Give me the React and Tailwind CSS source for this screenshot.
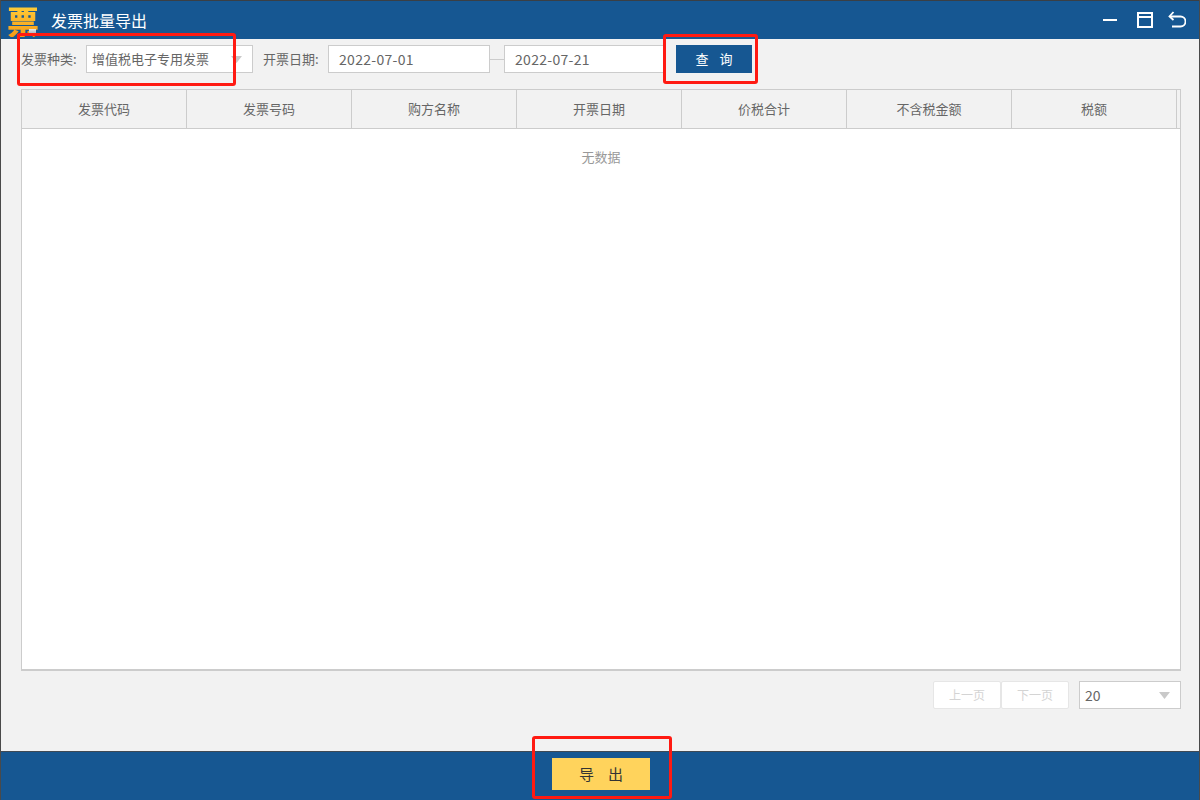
const font = "[font-family:'Noto_Sans_CJK_SC','Liberation_Sans',sans-serif]"

const columns = ['发票代码', '发票号码', '购方名称', '开票日期', '价税合计', '不含税金额', '税额']

function Caret({ className }) {
  return (
    <svg width="11" height="7" viewBox="0 0 11 7" className={className}>
      <path d="M0 0h11L5.5 7z" fill="#c9c9c9" />
    </svg>
  )
}

function RedBox({ className }) {
  return <div className={`absolute border-[3px] border-[#ff1a12] rounded-[3px] pointer-events-none ${className}`} />
}

export default function App() {
  return (
    <div className={`${font} relative w-[1200px] h-[800px] flex flex-col overflow-hidden bg-[#f2f2f2] border-x border-[#4a4a4a] text-[13px] text-[#666]`}>
      <header className="h-[39px] shrink-0 flex items-center bg-[#165792] border-t border-[#3a3f45] text-white">
        <div className="relative ml-[6px] w-[32px] h-[34px] flex items-center justify-center">
          <span className="text-[32px] leading-[34px] font-black bg-gradient-to-b from-[#ffd23c] to-[#f59a12] bg-clip-text text-transparent">票</span>
          <span className="absolute right-[3px] bottom-[2px] w-[7px] h-[6px] bg-gradient-to-b from-[#e8e8e8] to-[#8fa3b5]" />
        </div>
        <h1 className="ml-[12px] text-[16px] leading-none font-normal">发票批量导出</h1>
        <div className="ml-auto flex items-center mr-[13px]">
          <svg width="14" height="14" viewBox="0 0 14 14" fill="none" stroke="white" strokeWidth="2"><path d="M0 7h14" /></svg>
          <svg className="ml-[20px]" width="16" height="16" viewBox="0 0 16 16" fill="none" stroke="white" strokeWidth="2"><path d="M1 1h14v14H1zM1 5h14" /></svg>
          <svg className="ml-[15px]" width="18" height="18" viewBox="0 0 18 18" fill="none" stroke="white" strokeWidth="1.8"><path d="M5.5 1 1.5 5.5 5.5 9" /><path d="M2 5.5h10.5a4.5 4.5 0 0 1 0 10H4" /></svg>
        </div>
      </header>

      <div className="h-[50px] shrink-0 flex items-start pt-[6px] pl-[20px]">
        <span className="w-[65px] leading-[28px]">发票种类:</span>
        <div className="w-[167px] h-[28px] flex items-center justify-between bg-white border border-[#ccc] pl-[5px] pr-[10px]">
          <span>增值税电子专用发票</span>
          <Caret />
        </div>
        <span className="ml-[10px] w-[65px] leading-[28px]">开票日期:</span>
        <div className="w-[162px] h-[28px] flex items-center bg-white border border-[#ccc] pl-[10px] text-[14px] tracking-[0.3px]">2022-07-01</div>
        <div className="w-[14px] h-[28px] flex items-center"><div className="w-full h-px bg-[#ccc]" /></div>
        <div className="w-[162px] h-[28px] flex items-center bg-white border border-[#ccc] pl-[10px] text-[14px] tracking-[0.3px]">2022-07-21</div>
        <button className="ml-[10px] w-[76px] h-[28px] bg-[#165792] text-white text-[13px] tracking-[4px] pl-[4px] whitespace-pre">查 询</button>
      </div>

      <div className="ml-[20px] w-[1160px] h-[582px] shrink-0 flex flex-col bg-white border border-[#ccc] border-b-2">
        <div className="h-[39px] shrink-0 flex bg-[#f2f2f2] border-b border-[#ccc] pr-[3px]">
          {columns.map((c) => (
            <div key={c} className="flex-1 flex items-center justify-center border-r border-[#ccc]">{c}</div>
          ))}
        </div>
        <div className="pt-[19px] text-center text-[#999] leading-[18px]">无数据</div>
      </div>

      <div className="h-[28px] mt-[10px] shrink-0 flex justify-end items-start pr-[18px]">
        <div className="w-[68px] h-[28px] flex items-center justify-center bg-white border border-[#e6e6e6] rounded-[2px] text-[#d4d4d4] text-[12px]">上一页</div>
        <div className="w-[68px] h-[28px] flex items-center justify-center bg-white border border-[#e6e6e6] rounded-[2px] text-[#d4d4d4] text-[12px]">下一页</div>
        <div className="ml-[10px] w-[102px] h-[28px] flex items-center justify-between bg-white border border-[#ccc] pl-[5px] pr-[10px] text-[14px]">
          <span>20</span>
          <Caret className="mt-[1px]" />
        </div>
      </div>

      <footer className="mt-auto h-[49px] shrink-0 flex justify-center items-start pt-[6px] bg-[#165792] border-t border-[#3f4a55]">
        <button className="ml-[2px] w-[98px] h-[32px] bg-[#ffd35c] text-[#333] text-[15px] tracking-[14px] pl-[14px] whitespace-pre">导出</button>
      </footer>

      <RedBox className="left-[16px] top-[33px] w-[219px] h-[53px]" />
      <RedBox className="left-[662px] top-[34px] w-[95px] h-[50px]" />
      <RedBox className="left-[531px] top-[736px] w-[140px] h-[63px]" />
    </div>
  )
}
